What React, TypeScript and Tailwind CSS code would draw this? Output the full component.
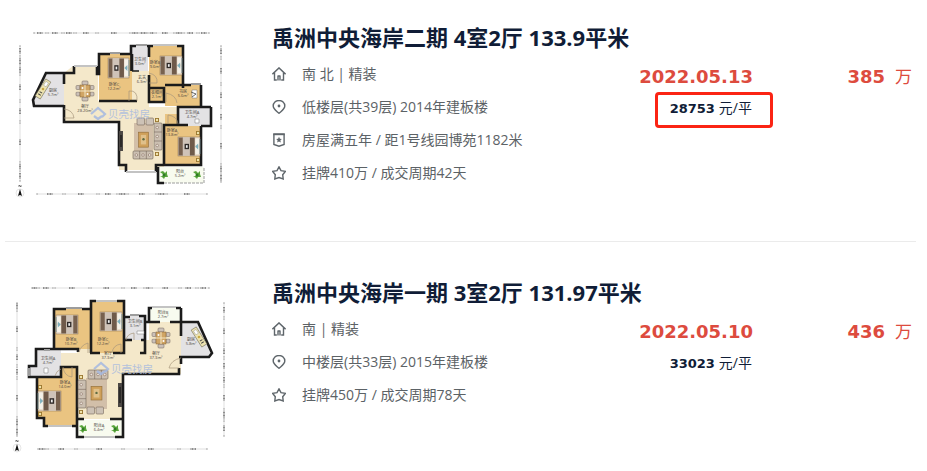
import React from "react";

const INK = "#1b1b1b";
const WOOD = "#eac481";
const TILE = "#f4e8ca";
const GREY = "#e3e2e4";

type Box = { x: number; y: number; w: number; h: number };

function Bed({ x, y, w, h, flip = false }: Box & { flip?: boolean }) {
  return (
    <g transform={flip ? `translate(${2 * x + w} 0) scale(-1 1)` : undefined}>
      <rect x={x} y={y} width={w} height={h} fill="#e9dccb" stroke="#8b6f4f" strokeWidth="0.5" />
      <rect x={x + 0.5} y={y + 0.5} width={w * 0.2} height={h - 1} fill="#77614f" />
      <rect x={x + w * 0.22} y={y + 0.5} width={w * 0.32} height={h - 1} fill="#cfc3b8" />
      <rect x={x + w * 0.3} y={y + h * 0.36} width={w * 0.2} height={h * 0.28} fill="#2f2a28" />
      <rect x={x + w * 0.36} y={y + h * 0.43} width={w * 0.08} height={h * 0.14} fill="#eee" />
      <rect x={x + w * 0.54} y={y + 0.5} width={w * 0.22} height={h - 1} fill="#6f5a4a" />
      <rect x={x + w * 0.79} y={y + 1.5} width={w * 0.17} height={h * 0.36} rx="1" fill="#f5f1e8" />
      <rect x={x + w * 0.79} y={y + h * 0.54} width={w * 0.17} height={h * 0.36} rx="1" fill="#f5f1e8" />
      <path d={`M${x + w * 0.78} ${y + h * 0.5} l3 -3 v6 z`} fill="#7fb0bd" />
      <path d={`M${x + w} ${y + 2} v${h - 4}`} stroke="#5b8291" strokeWidth="0.8" />
    </g>
  );
}

function Dining({ x, y }: { x: number; y: number }) {
  return (
    <g transform={`translate(${x} ${y})`}>
      <g fill="#cbc1b8" stroke="#6e6259" strokeWidth="0.5">
        <rect x="-3" y="-10" width="6" height="4" rx="1" />
        <rect x="-3" y="6" width="6" height="4" rx="1" />
        <rect x="-9" y="-5.500" width="4" height="4" rx="1" />
        <rect x="-9" y="1" width="4" height="4" rx="1" />
        <rect x="5" y="-5.500" width="4" height="4" rx="1" />
        <rect x="5" y="1" width="4" height="4" rx="1" />
      </g>
      <rect x="-5" y="-6" width="10" height="12" fill="#d0a564" stroke="#7d5a2d" strokeWidth="0.5" />
      <path d="M-9 0H9M0 -6V6" stroke="#f3e6c4" strokeWidth="1" />
      <circle cx="-2.500" cy="-3" r="1" fill="#fff" />
      <circle cx="2.500" cy="3" r="1" fill="#fff" />
    </g>
  );
}

function Sofa({ x, y, w, h }: Box) {
  const tall = h > w;
  return (
    <g>
      <rect x={x} y={y} width={w} height={h} rx="1" fill="#cbbfb1" stroke="#6f6154" strokeWidth="0.6" />
      {[1, 2].map((n) =>
        tall ? (
          <path key={n} d={`M${x} ${y + (h * n) / 3}h${w}`} stroke="#75675b" strokeWidth="0.6" />
        ) : (
          <path key={n} d={`M${x + (w * n) / 3} ${y}v${h}`} stroke="#75675b" strokeWidth="0.6" />
        ),
      )}
      {[0, 1, 2].map((n) => (
        <circle
          key={n}
          cx={tall ? x + w * 0.4 : x + (w * (n + 0.5)) / 3}
          cy={tall ? y + (h * (n + 0.5)) / 3 : y + h * 0.5}
          r="1.300"
          fill="#ece5dd"
          stroke="#7a5e50"
          strokeWidth="0.5"
        />
      ))}
    </g>
  );
}

function Rug({ x, y, w, h }: Box) {
  return (
    <g>
      <rect x={x} y={y} width={w} height={h} fill="#d2bfa9" />
      <rect x={x + w * 0.24} y={y + h * 0.27} width={w * 0.52} height={h * 0.44} fill="#cfa05a" stroke="#8f6a36" strokeWidth="0.6" />
      <rect x={x + w * 0.36} y={y + h * 0.35} width={w * 0.28} height={h * 0.28} fill="#e0c08a" />
      <circle cx={x + w * 0.5} cy={y + h * 0.48} r="1.200" fill="#5f6b43" />
    </g>
  );
}

function Armchairs({ x, y }: { x: number; y: number }) {
  return (
    <g fill="#cdc2b6" stroke="#75675b" strokeWidth="0.6">
      <rect x={x} y={y} width="7.500" height="7" rx="1" />
      <rect x={x + 9} y={y} width="7.500" height="7" rx="1" />
    </g>
  );
}

function Tv({ x, y, h }: { x: number; y: number; h: number }) {
  return (
    <g>
      <rect x={x} y={y} width="4" height={h} fill="#4b4744" />
      <path d={`M${x + 2} ${y + 4}v${h - 8}`} stroke="#161616" strokeWidth="1.200" />
    </g>
  );
}

function Plant({ x, y }: { x: number; y: number }) {
  return (
    <g transform={`translate(${x} ${y})`} fill="#58a53b">
      <path d="M0 0L-4 -3L-1 -4L1 -2L3 -4L3 -1L4 2L1 2L0 4L-2 2L-4 2Z" />
      <circle r="1.500" fill="#2f7a24" />
    </g>
  );
}

function Table({ x, y }: { x: number; y: number }) {
  return (
    <g>
      <rect x={x} y={y} width="4" height="4" fill="#9a7730" />
      <circle cx={x + 2} cy={y + 2} r="1.200" fill="#f2e6b0" />
    </g>
  );
}

function Desk({ x, y, angle }: { x: number; y: number; angle: number }) {
  return (
    <g transform={`translate(${x} ${y}) rotate(${angle})`}>
      <rect x="-3" y="-10" width="6" height="20" fill="#ede3b0" stroke="#77725e" strokeWidth="0.6" />
      <rect x="-1.500" y="-8" width="3" height="4.500" fill="#fff" stroke="#888" strokeWidth="0.4" />
      <circle cx="0" cy="0" r="1.300" fill="#c8a83f" />
      <path d="M-1.500 4h3M-1.500 6.500h3" stroke="#444" strokeWidth="1" />
    </g>
  );
}

function Room({ x, y, name, area }: { x: number; y: number; name: string; area: string }) {
  return (
    <text x={x} y={y} textAnchor="middle" fontSize="4" fill="#4a463e">
      <tspan x={x}>{name}</tspan>
      <tspan x={x} dy="4">
        {area}
      </tspan>
    </text>
  );
}

function Brand({ x, y }: { x: number; y: number }) {
  return (
    <g opacity="0.85">
      <path
        d={`M${x - 7} ${y}L${x} ${y - 6}L${x + 7} ${y}L${x + 4} ${y + 3}M${x - 4} ${y + 2}L${x} ${y + 5}L${x + 4} ${y + 2}`}
        fill="none"
        stroke="#a5b9e2"
        strokeWidth="2.200"
      />
      <text x={x + 10} y={y + 4} fontSize="10.500" fill="#a9bbe0">
        贝壳找房
      </text>
    </g>
  );
}

/* A dimension line: arrow-tipped spans, each with its tiny measure in the middle. */
function Scale({ from, at, stops, vertical = false }: { from: number; at: number; stops: number[]; vertical?: boolean }) {
  const starts = [from, ...stops.slice(0, -1)];
  return (
    <g>
      {stops.map((end, i) => {
        const a = starts[i] + 1;
        const b = end - 1;
        const m = (a + b) / 2;
        const half = Math.min(3, (b - a) / 2 - 0.5);
        return vertical ? (
          <g key={end}>
            <path d={`M${at} ${a}V${b}`} stroke="#bdbdbd" strokeWidth="0.5" />
            <path d={`M${at - 1} ${a}h2M${at - 1} ${b}h2`} stroke="#777" strokeWidth="0.6" />
            <path d={`M${at} ${m - half}V${m + half}`} stroke="#8f8f8f" strokeWidth="2" strokeDasharray="1 0.5" />
          </g>
        ) : (
          <g key={end}>
            <path d={`M${a} ${at}H${b}`} stroke="#bdbdbd" strokeWidth="0.5" />
            <path d={`M${a} ${at - 1}v2M${b} ${at - 1}v2`} stroke="#777" strokeWidth="0.6" />
            <path d={`M${m - half} ${at}H${m + half}`} stroke="#8f8f8f" strokeWidth="2" strokeDasharray="1 0.5" />
          </g>
        );
      })}
    </g>
  );
}

function North({ x, y }: { x: number; y: number }) {
  return (
    <g>
      <circle cx={x} cy={y} r="4" fill="none" stroke="#ccc" strokeWidth="0.5" />
      <path d={`M${x} ${y - 4}L${x + 2} ${y + 3}L${x} ${y + 2}L${x - 2} ${y + 3}Z`} fill="#111" />
      <path d={`M${x - 1} ${y - 6}v-2l2 2v-2`} stroke="#333" strokeWidth="0.6" fill="none" />
    </g>
  );
}

function FourRoomPlan() {
  return (
    <svg viewBox="5 21 240 180" className="block h-[180px] w-[240px]" role="img" aria-label="4室2厅户型图">
      <Scale from={33} at={33} stops={[47, 63, 75, 97, 131, 139, 149, 155, 175, 183, 198, 210]} />
      <Scale from={36} at={194} stops={[64, 98, 118, 127, 157, 166, 208]} />
      <Scale vertical from={45} at={20} stops={[57, 66, 74, 101, 122, 163, 170, 182]} />
      <Scale vertical from={45} at={221} stops={[58, 84, 107, 127, 165, 173, 183]} />
      <North x={20} y={193} />

      <path d="M64 73L73 66H98V101H131V71H149V107H178V124H164V170H119V122H64Z" fill={TILE} />
      <path d="M47 74H64V105H34L32 100Z" fill={GREY} />
      <path d="M99 54H132V101H99Z" fill={WOOD} />
      <path d="M149 45H183V88H149Z" fill={WOOD} />
      <path d="M149 89H164V102H149ZM165 85H202V106H165Z" fill={WOOD} />
      <path d="M132 45H148V71H132ZM178 107H210V126H178Z" fill={GREY} />
      <path d="M165 114H178V126H202V165H165Z" fill={WOOD} />
      <path d="M158 167H204V183H158Z" fill="#f8fbef" />

      <path
        d="M64 73H46L33 100L34 106H64M64 73H74V66M97 66V74H99V54H110M120 54H131V46H136M147 46H153M177 46H183V88M99 101H137M149 47V57M132 54V71M64 84V73M64 105V122H119V165H126V172M156 172V165H164V125H178V107H211M183 85H191M201 85V106M149 75V102H164V88H149M165 85H183M178 125H188M201 126V165H164M211 107V126H201M158 167V183H164M64 105V110"
        fill="none"
        stroke={INK}
        strokeWidth="2.600"
      />
      <path d="M74 66H97M110 53H120M136 45H147M153 45H177M191 84H201M126 172H156" stroke="#9c9c9c" strokeWidth="2.200" />
      <path d="M74 66H97M153 45H177M126 172H156" stroke="#fff" strokeWidth="0.8" />
      <path d="M131 54V71M132 71H139" stroke={INK} strokeWidth="1.600" />
      <path d="M164 183H204V167" fill="none" stroke="#9c9c9c" strokeWidth="1" strokeDasharray="3 1" />
      <path
        d="M64 109Q73 110 74 118H64M129 101V91Q138 90 137 101M149 73Q158 75 157 83H149M166 102V93Q176 95 177 103M168 124V115Q177 116 178 124"
        fill="none"
        stroke="#a7977c"
        strokeWidth="0.7"
      />

      <Desk x={43} y={89} angle={32} />
      <Dining x={85} y={91} />
      <Bed x={108} y={58} w={21} h={20} />
      <Bed x={160} y={56} w={22} h={19} />
      <Bed x={178} y={137} w={22} h={19} />
      <Table x={196} y={131} />
      <Table x={196} y={158} />
      <Rug x={134} y={123} w={19} h={34} />
      <Armchairs x={137} y={118} />
      <Sofa x={154} y={123} w={8} h={27} />
      <Sofa x={133} y={151} w={20} h={8} />
      <Table x={155} y={118} />
      <Table x={155} y={152} />
      <Tv x={119} y={131} h={20} />
      <path d="M192 90h5v8h-5zM195 119h4v4h-4z" fill="#fff" stroke="#777" strokeWidth="0.5" />
      <path d="M191 92l5 2l-4 3" stroke="#444" strokeWidth="0.8" fill="none" />
      <Plant x={164} y={175} />
      <Plant x={197} y={175} />

      <Room x={53} y={92} name="厨房" area="5.7m²" />
      <Room x={85} y={108} name="餐厅" area="28.20m²" />
      <Room x={114} y={86} name="卧室C" area="12.2m²" />
      <Room x={140} y={61} name="卫生间" area="3.0m²" />
      <Room x={155} y={64} name="卧室B" area="9.6m²" />
      <Room x={142} y={79} name="玄关" area="6.3m²" />
      <Room x={157} y={94} name="衣帽间" area="2.1m²" />
      <Room x={183} y={93} name="书房" area="5.6m²" />
      <Room x={192} y={114} name="卫生间A" area="4.7m²" />
      <Room x={172} y={132} name="卧室A" area="13.8m²" />
      <Room x={180} y={173} name="阳台" area="5.2m²" />
      <Brand x={98} y={114} />
    </svg>
  );
}

function ThreeRoomPlan() {
  return (
    <svg viewBox="5 276 240 180" className="block h-[180px] w-[240px]" role="img" aria-label="3室2厅户型图">
      <Scale from={31} at={288} stops={[38, 54, 90, 123, 145, 151, 180, 197, 210]} />
      <Scale from={37} at={449} stops={[47, 76, 123, 179, 208]} />
      <Scale vertical from={302} at={17} stops={[310, 349, 366, 378, 418, 427, 437]} />
      <Scale vertical from={302} at={224} stops={[318, 345, 358, 374, 386, 410, 420, 437]} />
      <North x={17} y={448} />

      <path d="M61 353H77V349H91V353H125V340H149V322H181V374H123V419H77V367H61Z" fill={TILE} />
      <path d="M54 309H91V349H54ZM91 301H123V353H91Z" fill={WOOD} />
      <path d="M36 350H61V377H29V366H36ZM125 316H145V340H125ZM181 323H198L212 354L209 357H181Z" fill={GREY} />
      <path d="M37 378H61V368H76V426H44V418H37Z" fill={WOOD} />
      <path d="M149 308H180V322H149ZM77 420H123V437H77Z" fill="#f8fbef" />

      <path
        d="M66 309H54V349H36V366H29V377H61V367H77V437H84M82 309H91V301H96M117 301H124V317H130M139 316H145V340H141M91 309V353M54 349H78V352M90 353H100M113 353H124V317M124 353V340H132M145 340V353H140M149 307V322H160M170 322H198L212 353L209 357H179M181 308V336M181 357V364M179 368V374H123V437H115M37 378V418H44V426H48M77 419H84M110 419H123M72 426H77M144 322H149V308H152M176 308H181"
        fill="none"
        stroke={INK}
        strokeWidth="2.600"
      />
      <path
        d="M66 308H82M96 301H117M130 315H139M152 307H176M48 426H72M84 437H115M44 350H50M29 368V376"
        stroke="#9c9c9c"
        strokeWidth="2.200"
      />
      <path d="M96 301H117M152 307H176M84 437H115M48 426H72" stroke="#fff" strokeWidth="0.8" />
      <path
        d="M79 352Q81 345 88 343V353M112 353Q113 345 121 344V353M126 340Q127 334 134 333V340M181 358Q171 360 169 368H179M63 367Q64 376 72 377V367M55 376Q56 371 61 369"
        fill="none"
        stroke="#a7977c"
        strokeWidth="0.7"
      />

      <Bed x={56} y={315} w={22} h={19} flip />
      <Bed x={100} y={312} w={22} h={19} />
      <Bed x={38} y={391} w={23} h={20} flip />
      <Table x={38} y={385} />
      <Table x={38} y={412} />
      <Dining x={161} y={338} />
      <Desk x={199} y={337} angle={-32} />
      <Rug x={86} y={378} w={21} h={31} />
      <Sofa x={78} y={380} w={8} h={28} />
      <Sofa x={88} y={370} w={20} h={9} />
      <Armchairs x={87} y={407} />
      <Table x={79} y={375} />
      <Table x={79} y={410} />
      <Tv x={118} y={383} h={24} />
      <path d="M44 368h4v5h-4zM137 331h7v3h-7z" fill="#fff" stroke="#777" strokeWidth="0.5" />
      <Plant x={83} y={429} />
      <Plant x={115} y={429} />

      <Room x={71} y={341} name="卧室B" area="10.7m²" />
      <Room x={103} y={341} name="卧室C" area="12.2m²" />
      <Room x={135} y={323} name="卫生间B" area="3.1m²" />
      <Room x={163} y={314} name="阳台B" area="2.7m²" />
      <Room x={156} y={355} name="餐厅" area="37.3m²" />
      <Room x={191} y={341} name="厨房" area="5.8m²" />
      <Room x={48} y={360} name="卫生间A" area="4.7m²" />
      <Room x={65} y={384} name="卧室A" area="14.0m²" />
      <Room x={108} y={355} name="客厅" area="37.3m²" />
      <Room x={99} y={427} name="阳台A" area="6.4m²" />
      <Brand x={101} y={369} />
    </svg>
  );
}

type IconName = "home" | "pin" | "badge" | "star";

function Icon({ name }: { name: IconName }) {
  return (
    <svg
      viewBox="0 0 14 14"
      className="block size-[14px] shrink-0 text-[#5f666b]"
      fill="none"
      stroke="currentColor"
      strokeWidth="1.400"
      aria-hidden="true"
    >
      {name === "home" && <path d="M0.400 7.200L7 0.900L13.600 7.200M2.500 5.500V13H4.800M11.500 5.500V13H9.200M6 13.600V9M8 13.600V9M5.500 9H8.500" />}
      {name === "pin" && (
        <>
          <path d="M7 13.300C4.500 11 1.200 9 1.200 6A5.800 5.500 0 0 1 12.800 6C12.800 9 9.500 11 7 13.300Z" />
          <circle cx="7" cy="6" r="1.400" fill="currentColor" stroke="none" />
        </>
      )}
      {name === "badge" && (
        <>
          <path d="M1.900 1.300H12.100V11.500L7 13.200L1.900 11.500Z" />
          <path d="M1.300 1.300H12.700" strokeWidth="1.800" />
          <path
            d="M7 3.800L7.900 5.700L9.900 6L8.400 7.300L8.800 9.400L7 8.400L5.200 9.400L5.600 7.300L4.100 6L6.100 5.700Z"
            fill="currentColor"
            stroke="none"
          />
        </>
      )}
      {name === "star" && <path d="M7 0.900L9 4.700L13.300 5.400L10.700 8.700L11.200 12.900L7 11.600L2.800 12.900L3.300 8.700L0.700 5.400L5 4.700Z" />}
    </svg>
  );
}

type Deal = {
  title: string;
  facts: { icon: IconName; text: string }[];
  date: string;
  unit: string;
  total: string;
  marked: boolean;
  plan: React.ReactNode;
};

const deals: Deal[] = [
  {
    title: "禹洲中央海岸二期 4室2厅 133.9平米",
    facts: [
      { icon: "home", text: "南 北 | 精装" },
      { icon: "pin", text: "低楼层(共39层) 2014年建板楼" },
      { icon: "badge", text: "房屋满五年 / 距1号线园博苑1182米" },
      { icon: "star", text: "挂牌410万 / 成交周期42天" },
    ],
    date: "2022.05.13",
    unit: "28753",
    total: "385",
    marked: true,
    plan: <FourRoomPlan />,
  },
  {
    title: "禹洲中央海岸一期 3室2厅 131.97平米",
    facts: [
      { icon: "home", text: "南 | 精装" },
      { icon: "pin", text: "中楼层(共33层) 2015年建板楼" },
      { icon: "star", text: "挂牌450万 / 成交周期78天" },
    ],
    date: "2022.05.10",
    unit: "33023",
    total: "436",
    marked: false,
    plan: <ThreeRoomPlan />,
  },
];

const NUM = "font-['DejaVu_Sans',sans-serif] font-bold";

function DealItem({ deal }: { deal: Deal }) {
  return (
    <li className="flex gap-[27px] border-b border-[#ebebeb] pt-[34px] pb-10 first:pt-[21px] last:border-b-0 last:pb-0">
      <a href="#" className="shrink-0">
        {deal.plan}
      </a>
      <div className="min-w-0 flex-1">
        <h2 className="text-[22px] leading-8 font-bold text-[#101d37]">
          <a href="#">{deal.title}</a>
        </h2>
        <div className="mt-1 flex">
          <ul className="flex-1 text-[14px] text-[#5c6266]">
            {deal.facts.map((fact) => (
              <li key={fact.text} className="flex h-[33px] items-center gap-4">
                <Icon name={fact.icon} />
                <span>{fact.text}</span>
              </li>
            ))}
          </ul>
          <div className="flex flex-col items-end pt-1.5">
            <p className={`pr-5 text-[18px] leading-7 text-[#dd4b3e] ${NUM}`}>{deal.date}</p>
            <p
              className={`mt-px flex h-9 items-baseline gap-1 rounded-[4px] border-3 pr-[18px] pl-3 text-[14px] leading-[26px] text-[#101d37] ${
                deal.marked ? "border-[#fb2414]" : "border-transparent"
              }`}
            >
              <span className={`text-[13px] ${NUM}`}>{deal.unit}</span>
              <span>元/平</span>
            </p>
          </div>
          <p className="flex w-[143px] items-baseline justify-end gap-[10px] pt-1.5 pr-1 leading-7 text-[#dd4b3e]">
            <span className={`text-[18px] ${NUM}`}>{deal.total}</span>
            <span className="text-[17px]">万</span>
          </p>
        </div>
      </div>
    </li>
  );
}

export default function App() {
  return (
    <main className="min-h-screen bg-white pr-[11px] pl-[5px] font-['Open_Sans','Noto_Sans_CJK_SC',sans-serif]">
      <ul>
        {deals.map((deal) => (
          <DealItem key={deal.title} deal={deal} />
        ))}
      </ul>
    </main>
  );
}
